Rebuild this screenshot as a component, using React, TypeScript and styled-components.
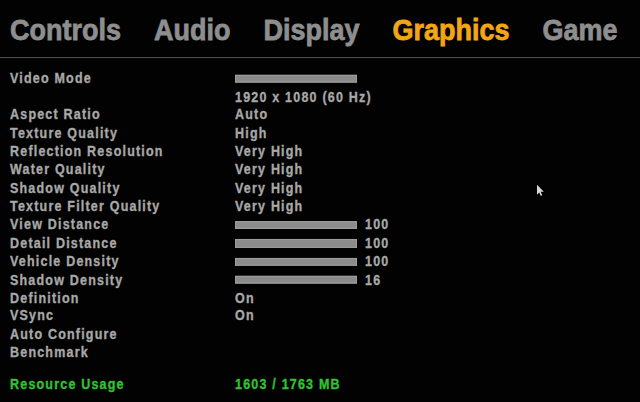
import React from "react"
import styled, { createGlobalStyle } from "styled-components"

const GlobalStyle = createGlobalStyle`
    html {
        overflow: hidden;
        background: #000;
    }
    body {
        margin: 0;
        padding: 0;
        background: #000;
        font-family: "Liberation Sans", Arial, Helvetica, sans-serif;
        font-weight: 700;
    }
`

const Frame = styled.div`
    width: 640px;
    height: 402px;
    background: #020202;
    overflow: hidden;
`

// the game renders at 16:9 and the capture is stretched to 640x402
const Screen = styled.div`
    position: relative;
    width: 640px;
    height: 360px;
    transform: scaleY(1.1167);
    transform-origin: top left;
`

const TabBar = styled.div`
    display: flex;
    gap: 33px;
    padding: 12.4px 0 8.6px 10px;
    border-bottom: 1.8px solid #4c4c4c;
`

const Tab = styled.div<{ $active?: boolean }>`
    font-size: 27px;
    line-height: 30px;
    -webkit-text-stroke: 0.7px currentColor;
    color: ${({ $active }) => ($active ? "#f3a614" : "#8e8e8e")};
`

const List = styled.div`
    display: grid;
    grid-template-columns: 225px 1fr;
    padding: 10.4px 0 0 10px;
    font-size: 12.5px;
    line-height: 16.37px;
    letter-spacing: 1.2px;
    -webkit-text-stroke: 0.3px currentColor;
`

const Cell = styled.div<{ $green?: boolean; $spaced?: boolean }>`
    color: ${({ $green }) => ($green ? "#32c232" : "#a8a8a8")};
    margin-top: ${({ $spaced }) => ($spaced ? "11.4px" : "0")};
    white-space: nowrap;
`

const SliderCell = styled.div`
    display: flex;
    align-items: center;
    gap: 8px;
    height: 16.37px;
    color: #a8a8a8;
`

const Bar = styled.div`
    width: 122px;
    height: 7.2px;
    box-sizing: border-box;
    background: #8b8b8b;
    border: 1px solid #9c9c9c;
`

const Cursor = styled.svg`
    position: absolute;
    left: 536px;
    top: 164.5px;
`

type Row = { label: string; value?: string; slider?: string; bar?: boolean }

const rows: Row[] = [
    { label: "Video Mode", bar: true },
    { label: "", value: "1920 x 1080 (60 Hz)" },
    { label: "Aspect Ratio", value: "Auto" },
    { label: "Texture Quality", value: "High" },
    { label: "Reflection Resolution", value: "Very High" },
    { label: "Water Quality", value: "Very High" },
    { label: "Shadow Quality", value: "Very High" },
    { label: "Texture Filter Quality", value: "Very High" },
    { label: "View Distance", slider: "100" },
    { label: "Detail Distance", slider: "100" },
    { label: "Vehicle Density", slider: "100" },
    { label: "Shadow Density", slider: "16" },
    { label: "Definition", value: "On" },
    { label: "VSync", value: "On" },
    { label: "Auto Configure" },
    { label: "Benchmark" },
]

const tabs = ["Controls", "Audio", "Display", "Graphics", "Game"]

export default function App() {
    return (
        <>
            <GlobalStyle />
            <Frame>
                <Screen>
                    <TabBar>
                        {tabs.map((t) => (
                            <Tab key={t} $active={t === "Graphics"}>{t}</Tab>
                        ))}
                    </TabBar>
                    <List>
                        {rows.map((r, i) => (
                            <React.Fragment key={i}>
                                <Cell>{r.label || "\u00a0"}</Cell>
                                {r.bar || r.slider ? (
                                    <SliderCell>
                                        <Bar />
                                        {r.slider}
                                    </SliderCell>
                                ) : (
                                    <Cell>{r.value || "\u00a0"}</Cell>
                                )}
                            </React.Fragment>
                        ))}
                        <Cell $green $spaced>Resource Usage</Cell>
                        <Cell $green $spaced>1603 / 1763 MB</Cell>
                    </List>
                    <Cursor width="9" height="11" viewBox="0 0 9 11">
                        <path d="M1 0.5 L1 9.5 L3.2 7.4 L4.8 10.5 L6.2 9.8 L4.7 6.8 L7.8 6.8 Z" fill="#d8d8d8" />
                    </Cursor>
                </Screen>
            </Frame>
        </>
    )
}
